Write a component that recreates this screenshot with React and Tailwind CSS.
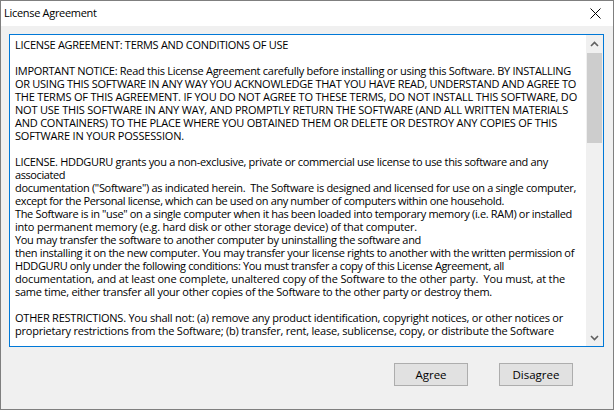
import React, { useRef, useState, useLayoutEffect } from 'react'

// [text, right edge in px that the line should reach]
const lines = [
  ['LICENSE AGREEMENT: TERMS AND CONDITIONS OF USE', 288],
  ['', 0],
  ['IMPORTANT NOTICE: Read this License Agreement carefully before installing or using this Software. BY INSTALLING', 571],
  ['OR USING THIS SOFTWARE IN ANY WAY YOU ACKNOWLEDGE THAT YOU HAVE READ, UNDERSTAND AND AGREE TO', 576],
  ['THE TERMS OF THIS AGREEMENT. IF YOU DO NOT AGREE TO THESE TERMS, DO NOT INSTALL THIS SOFTWARE, DO', 577],
  ['NOT USE THIS SOFTWARE IN ANY WAY, AND PROMPTLY RETURN THE SOFTWARE (AND ALL WRITTEN MATERIALS', 568],
  ['AND CONTAINERS) TO THE PLACE WHERE YOU OBTAINED THEM OR DELETE OR DESTROY ANY COPIES OF THIS', 557],
  ['SOFTWARE IN YOUR POSSESSION.', 184],
  ['', 0],
  ['LICENSE. HDDGURU grants you a non-exclusive, private or commercial use license to use this software and any', 548],
  ['associated', 65],
  ['documentation ("Software") as indicated herein.  The Software is designed and licensed for use on a single computer,', 576],
  ['except for the Personal license, which can be used on any number of computers within one household.', 504],
  ['The Software is in "use" on a single computer when it has been loaded into temporary memory (i.e. RAM) or installed', 572],
  ['into permanent memory (e.g. hard disk or other storage device) of that computer.', 417],
  ['You may transfer the software to another computer by uninstalling the software and', 421],
  ['then installing it on the new computer. You may transfer your license rights to another with the written permission of', 574],
  ['HDDGURU only under the following conditions: You must transfer a copy of this License Agreement, all', 504],
  ['documentation, and at least one complete, unaltered copy of the Software to the other party.  You must, at the', 565],
  ['same time, either transfer all your other copies of the Software to the other party or destroy them.', 492],
  ['', 0],
  ['OTHER RESTRICTIONS. You shall not: (a) remove any product identification, copyright notices, or other notices or', 563],
  ['proprietary restrictions from the Software; (b) transfer, rent, lease, sublicense, copy, or distribute the Software', 554],
]

// text starts at x=15 in the window
function FitLine({ text, end }) {
  const ref = useRef(null)
  const [ls, setLs] = useState(0)

  useLayoutEffect(() => {
    function measure() {
      const el = ref.current
      if (!el || !end) return
      const prev = el.style.letterSpacing
      el.style.letterSpacing = '0px'
      const w = el.getBoundingClientRect().width
      el.style.letterSpacing = prev
      setLs((end - 15 - w) / text.length)
    }
    measure()
    document.fonts?.ready.then(measure)
  }, [text, end])

  return (
    <div className="h-[13px] leading-[13px] text-[11px] whitespace-pre">
      <span ref={ref} style={{ letterSpacing: ls + 'px' }}>{text}</span>
    </div>
  )
}

function Chevron({ up }) {
  return (
    <svg width="9" height="6" viewBox="0 0 9 6">
      <path d={up ? 'M1 5 L4.5 1.5 L8 5' : 'M1 1 L4.5 4.5 L8 1'} fill="none" stroke="#606060" strokeWidth="1.6" />
    </svg>
  )
}

export default function App() {
  return (
    <div className="w-[614px] h-[410px] border border-[#7f7f7f] flex flex-col bg-[#f0f0f0] text-black" style={{ fontFamily: '"Open Sans", "Liberation Sans", sans-serif' }}>
      <div className="h-[25px] bg-white flex items-center justify-between pl-[3px] pr-[12px]">
        <span className="text-[11px] tracking-[-0.3px]">License Agreement</span>
        <svg width="11" height="11" viewBox="0 0 11 11">
          <path d="M0.5 0.5 L10.5 10.5 M10.5 0.5 L0.5 10.5" stroke="#000" strokeWidth="1" />
        </svg>
      </div>
      <div className="flex-1 flex flex-col pl-[8px] pr-[9px] pt-[8px]">
        <div className="h-[313px] border border-[#0078d7] bg-white flex">
          <div className="flex-1 overflow-hidden pl-[5px] pt-[3px]">
            {lines.map(([t, end], i) => (
              <FitLine key={i} text={t} end={end} />
            ))}
          </div>
          <div className="w-[17px] bg-[#f0f0f0] flex flex-col items-center">
            <div className="h-[17px] flex items-center justify-center"><Chevron up /></div>
            <div className="w-[15px] h-[90px] bg-[#cdcdcd] mt-[1px]" />
            <div className="flex-1" />
            <div className="h-[17px] flex items-center justify-center"><Chevron /></div>
          </div>
        </div>
        <div className="flex justify-end gap-[31px] mt-[16px] pr-[31px]">
          <button className="w-[74px] h-[23px] bg-[#e1e1e1] border border-[#adadad] text-[11.5px]">Agree</button>
          <button className="w-[74px] h-[23px] bg-[#e1e1e1] border border-[#adadad] text-[11.5px]">Disagree</button>
        </div>
      </div>
    </div>
  )
}
